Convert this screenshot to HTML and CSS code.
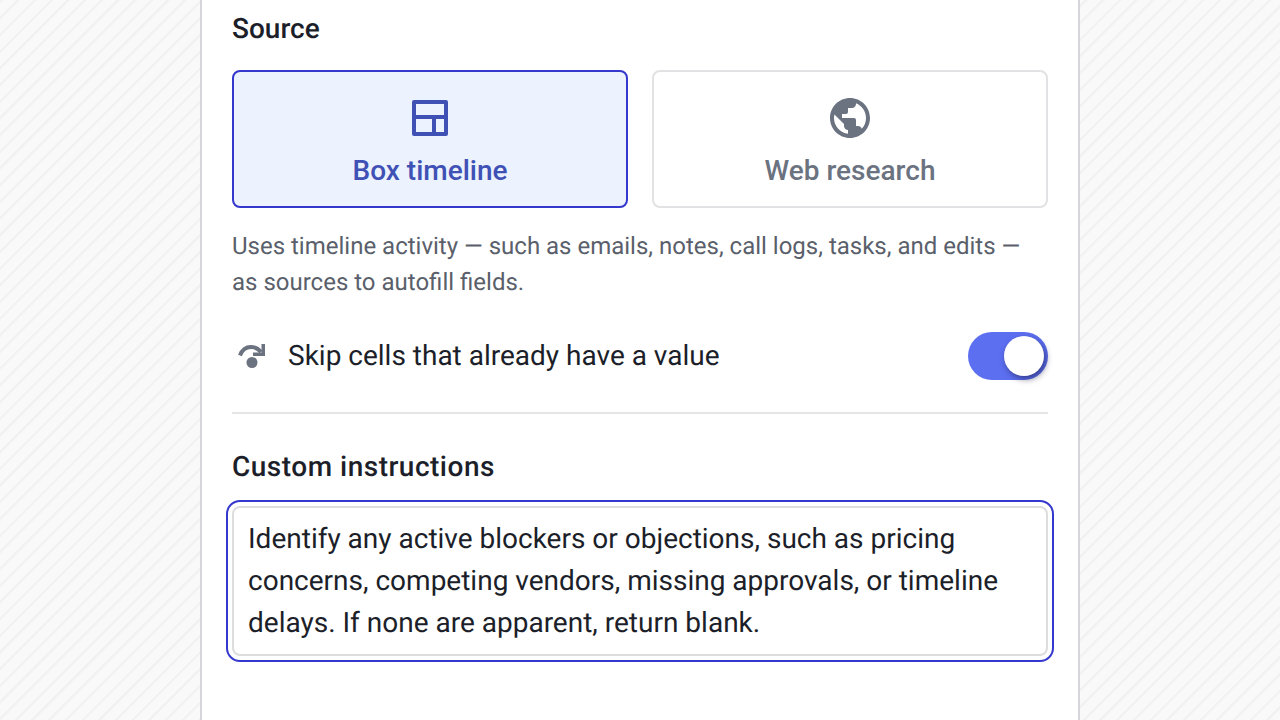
FILE: index.html
```html
<!DOCTYPE html>
<html lang="en">
<head>
    <meta charset="UTF-8">
    <meta name="viewport" content="width=device-width, initial-scale=1.0">
    <title>Autofill settings</title>
    <link rel="stylesheet" href="styles.css">
</head>
<body>
    <div class="panel">
        <h2 class="section-title">Source</h2>

        <div class="source-options">
            <button type="button" class="source-option selected">
                <svg class="source-icon" viewBox="0 0 48 48">
                    <path d="M8 6h32a2 2 0 0 1 2 2v32a2 2 0 0 1-2 2H8a2 2 0 0 1-2-2V8a2 2 0 0 1 2-2zm2 4v11h28V10H10zm0 15v13h16V25H10zm20 0v13h8V25h-8z" fill="currentColor" fill-rule="evenodd"/>
                </svg>
                <span>Box timeline</span>
            </button>
            <button type="button" class="source-option">
                <svg class="source-icon" viewBox="0 0 24 24">
                    <path d="M12 2C6.48 2 2 6.48 2 12s4.48 10 10 10 10-4.48 10-10S17.52 2 12 2zm-1 17.930c-3.950-.49-7-3.850-7-7.930 0-.62.08-1.210.21-1.790L9 15v1c0 1.100.9 2 2 2v1.930zm6.900-2.540c-.26-.81-1-1.390-1.900-1.390h-1v-3c0-.55-.45-1-1-1H8v-2h2c.55 0 1-.45 1-1V7h2c1.100 0 2-.9 2-2v-.41c2.930 1.190 5 4.060 5 7.410 0 2.080-.8 3.970-2.100 5.390z" fill="currentColor"/>
                </svg>
                <span>Web research</span>
            </button>
        </div>

        <p class="source-help">Uses timeline activity — such as emails, notes, call logs, tasks, and edits — as sources to autofill fields.</p>

        <div class="skip-row">
            <svg class="skip-icon" viewBox="0 0 40 40">
                <path d="M8 19.500C10 14 14 11 19 11c4 0 7 1.500 10 5" fill="none" stroke="currentColor" stroke-width="4"/>
                <path d="M33 8v12H21v-3.500h8.500V8z" fill="currentColor"/>
                <circle cx="20" cy="26.500" r="5.500" fill="currentColor"/>
            </svg>
            <span class="skip-label">Skip cells that already have a value</span>
            <span class="toggle"><span class="toggle-knob"></span></span>
        </div>

        <hr class="divider">

        <h2 class="section-title instructions-title">Custom instructions</h2>

        <div class="instructions-box">Identify any active blockers or objections, such as pricing concerns, competing vendors, missing approvals, or timeline delays. If none are apparent, return blank.</div>
    </div>
</body>
</html>
```

FILE: styles.css
```css
* {
    margin: 0;
    padding: 0;
    box-sizing: border-box;
}

html, body {
    height: 100%;
    overflow: hidden;
}

body {
    font-family: Roboto, sans-serif;
    color: #1c1f29;
    text-rendering: geometricPrecision;
    -webkit-font-smoothing: antialiased;
    background-color: #f9f9f9;
    background-image: repeating-linear-gradient(135deg, #f1f1f1 0, #f1f1f1 1.5px, #f9f9f9 3px, #f9f9f9 11.8px);
}

.panel {
    width: 880px;
    height: 720px;
    margin: 0 auto;
    padding: 11px 30px 0;
    background: #ffffff;
    border-left: 2px solid #d6d6da;
    border-right: 2px solid #d6d6da;
}

.section-title {
    font-size: 28px;
    line-height: 36px;
    font-weight: 470;
    color: #1c1f29;
}

.source-options {
    display: grid;
    grid-template-columns: 1fr 1fr;
    gap: 24px;
    margin-top: 23px;
}

.source-option {
    height: 138px;
    display: flex;
    flex-direction: column;
    align-items: center;
    padding-top: 22px;
    background: #ffffff;
    border: 2px solid #e2e2e4;
    border-radius: 8px;
    color: #6b7280;
    font-family: inherit;
    font-size: 28px;
    line-height: 36px;
    font-weight: 470;
}

.source-option.selected {
    background: #ecf2fe;
    border-color: #3538cd;
    color: #3f51b5;
}

.source-icon {
    width: 48px;
    height: 48px;
    margin-bottom: 11px;
}

.source-help {
    margin-top: 20px;
    font-size: 24px;
    line-height: 36px;
    color: #5a5f6b;
}

.skip-row {
    display: flex;
    align-items: center;
    margin-top: 32px;
    height: 48px;
}

.skip-icon {
    width: 40px;
    height: 40px;
    margin-right: 16px;
    color: #6b7280;
}

.skip-label {
    flex: 1;
    margin-bottom: 2px;
    font-size: 28px;
    color: #1c1f29;
}

.toggle {
    width: 80px;
    height: 48px;
    padding: 4px;
    display: flex;
    justify-content: flex-end;
    background: #5d6ff1;
    border-radius: 24px;
}

.toggle-knob {
    width: 40px;
    height: 40px;
    background: #ffffff;
    border-radius: 50%;
    box-shadow: 2px 3px 6px rgba(20, 20, 60, 0.55);
}

.divider {
    margin-top: 32px;
    border: none;
    border-top: 2px solid #e5e5e5;
}

.instructions-title {
    margin-top: 35px;
    letter-spacing: 0.5px;
}

.instructions-box {
    height: 150px;
    margin-top: 21px;
    padding: 10px 14px;
    font-size: 28px;
    line-height: 42px;
    color: #1c1f29;
    background: #ffffff;
    border: 2px solid #dddddd;
    border-radius: 8px;
    outline: 2px solid #3538cd;
    outline-offset: 4px;
}
```
